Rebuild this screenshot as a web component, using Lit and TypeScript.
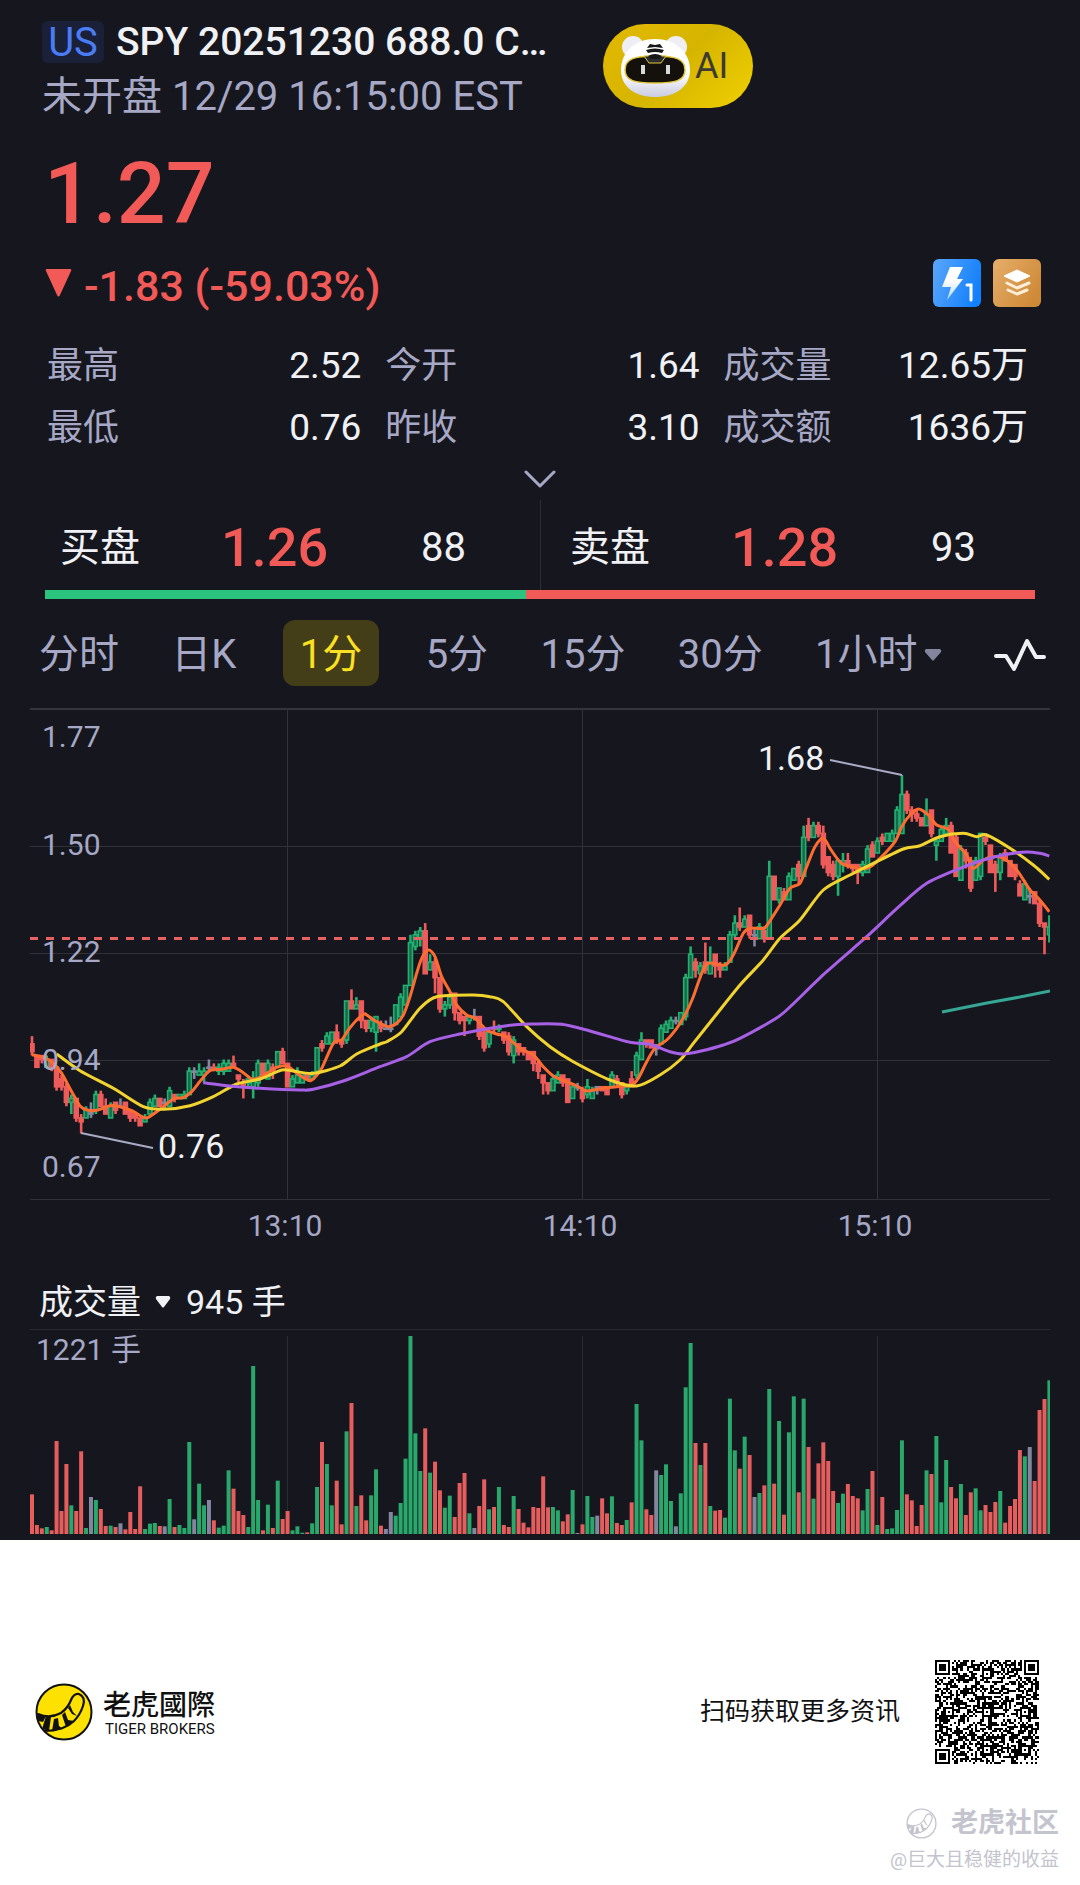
import { LitElement, html, svg, css } from "lit";
import { customElement, state } from "lit/decorators.js";
import { classMap } from "lit/directives/class-map.js";

type Tone = "r" | "g" | "n";

/* One entry per minute: tone, high, body top, body bottom, low (cents), volume height. */
const BARS = `
r 101 99 97 96 119|r 96 96 93 93 27|r 96 96 95 94 17|g 96 95 93 93 21|r 95 95 93 92 11
r 93 93 88 87 279|r 91 90 88 87 69|r 89 88 84 83 210|g 86 85 84 81 86|r 85 85 80 79 69
r 81 80 79 76 248|g 83 82 80 80 18|n 84 82 81 80 111|g 87 86 82 81 102|r 87 86 83 83 75
r 85 83 81 81 24|g 84 83 80 80 25|r 84 84 82 81 21|n 85 83 83 83 32|r 84 84 81 81 14
r 82 82 80 79 66|r 81 81 80 79 15|r 80 80 78 78 143|g 81 80 79 79 15|g 85 84 81 81 31
g 86 85 83 83 33|r 85 85 83 83 24|n 85 84 84 82 23|g 88 87 83 83 105|r 86 86 85 84 21
g 86 86 85 85 27|g 87 86 85 85 18|g 93 92 86 86 276|n 93 92 92 90 44|g 94 92 91 91 151
g 93 92 91 89 86|n 95 93 93 92 102|r 94 93 93 92 41|g 94 93 92 91 19|g 95 94 92 91 25
g 95 94 92 92 191|r 96 94 93 93 136|r 91 91 90 89 69|r 90 89 88 85 57|g 90 90 89 88 21
g 92 90 88 85 504|g 95 94 89 88 102|r 94 94 91 91 11|g 95 94 90 90 88|r 94 93 92 90 18
g 97 97 93 93 160|r 98 97 94 94 45|r 94 94 88 88 69|g 91 90 88 88 11|g 93 91 89 89 23
g 91 91 89 89 4|r 91 91 90 90 5|g 92 91 90 90 32|g 98 98 92 92 141|r 100 99 98 97 276
g 102 101 99 99 210|g 102 102 99 99 86|r 104 102 100 99 160|r 100 100 99 98 29|g 110 110 100 99 308
r 113 110 108 108 393|g 111 109 108 108 84|r 110 110 105 103 116|r 105 105 103 102 41|g 106 105 103 102 116
g 106 106 102 97 194|r 105 104 103 102 25|n 105 103 103 103 15|n 106 103 103 102 66|g 109 109 104 104 55
g 112 111 106 106 93|g 114 114 109 109 226|g 127 125 114 114 594|g 128 127 124 123 302|g 129 128 126 124 189
r 130 128 117 117 317|g 122 120 118 118 184|r 121 120 116 112 217|r 116 116 108 107 131|g 110 109 108 106 79
g 112 111 109 108 115|r 112 112 107 105 51|r 107 107 105 104 153|r 106 106 105 101 183|g 106 106 105 104 62
n 108 106 106 105 18|r 106 106 101 100 84|r 103 102 98 97 164|g 102 102 99 98 74|r 105 103 103 102 81
g 104 103 103 102 141|r 102 102 100 99 27|r 102 101 97 96 21|g 101 100 96 94 114|r 99 99 97 96 75
r 98 98 97 96 34|r 97 97 95 95 20|r 97 97 94 92 81|r 95 94 92 90 78|r 91 91 89 86 173
r 89 89 87 86 80|g 91 90 87 87 81|g 92 91 89 89 71|r 91 91 89 88 38|r 90 90 84 84 59
g 89 88 85 85 132|n 89 88 88 87 3|r 88 87 85 84 29|g 90 88 86 85 114|g 88 87 85 85 51
n 88 88 88 86 55|r 88 88 87 87 107|r 88 88 86 86 62|g 92 91 88 88 113|r 91 90 89 88 33
r 89 89 86 85 27|g 88 88 87 86 42|r 92 90 88 88 95|g 97 96 91 90 390|g 102 100 95 95 281
r 100 100 99 98 74|r 100 100 98 98 57|n 99 98 98 96 191|g 104 103 99 99 177|g 105 104 102 102 209
g 106 105 103 103 99|n 106 105 105 104 23|g 107 107 104 104 122|g 117 116 106 105 440|g 124 122 116 116 573
r 121 120 118 116 273|g 120 119 117 116 207|r 125 120 118 117 273|g 124 120 117 117 84|r 122 122 119 116 70
r 120 119 118 116 72|g 120 119 118 118 49|g 128 127 120 120 406|g 132 130 127 126 251|r 134 130 129 128 196
g 132 131 129 129 292|r 132 132 127 126 237|n 129 127 127 124 111|g 130 129 126 126 123|r 129 128 126 125 146
g 146 142 126 126 435|r 142 142 136 136 151|g 139 139 136 135 339|r 139 138 136 136 58|g 143 142 136 136 305
g 144 144 141 141 413|r 146 145 142 140 125|g 155 152 142 142 406|r 157 155 152 151 261|g 156 155 152 152 106
r 156 155 153 152 212|r 155 153 145 144 275|r 147 147 143 142 219|r 146 145 142 141 129|g 146 146 142 137 93
g 148 146 145 143 121|r 148 146 145 144 150|r 145 145 144 143 114|r 145 145 143 140 107|g 146 145 143 142 71
g 150 149 143 143 135|r 151 150 147 147 189|g 152 151 148 148 27|r 153 152 151 150 111|g 153 153 151 151 15
g 154 153 151 151 17|g 160 159 153 153 72|g 168 163 153 153 281|r 164 163 159 158 119|r 160 159 158 156 101
r 159 158 157 156 24|r 157 157 155 155 87|g 162 158 155 155 191|r 159 159 153 152 180|g 152 151 150 146 294
g 155 154 151 151 95|g 157 155 153 153 222|r 156 155 148 148 141|r 153 152 142 142 107|g 150 149 141 141 150
r 149 148 146 144 57|r 147 146 139 138 125|g 147 146 141 141 137|g 153 153 142 141 71|r 153 152 151 150 87
r 150 150 143 143 66|r 146 145 143 138 96|g 148 147 143 141 129|r 149 148 146 146 34|r 146 146 142 142 84
r 145 145 142 141 105|r 141 140 137 137 252|g 141 140 136 136 233|n 139 137 137 135 261|r 138 138 135 135 159
r 136 135 130 129 372|r 130 130 129 122 405|g 132 129 127 125 461`
  .trim()
  .split(/[|\n]/)
  .map((row) => {
    const [tone, ...nums] = row.trim().split(" ");
    const [high, top, bottom, low, volume] = nums.map(Number);
    return { tone: tone as Tone, high, top, bottom, low, volume: volume / 3 };
  });

const PITCH = 4.915;
const barX = (i: number) => 2 + i * PITCH;
const priceY = (cents: number) => 67 + (168 - cents) * 3.897;

/* The average lines are stored in three segments, in thirds of a chart unit. */
const ORIGINS = [
  [-30, 272],
  [330, 172],
  [670, -8],
];
/* Joins the points of an average line with a smooth curve. */
const average = (...segments: string[]) => {
  const pts = segments.flatMap((segment, i) =>
    segment.split(" ").map((pair) => {
      const [x, y] = pair.split(",").map(Number);
      return [ORIGINS[i][0] + x / 3, ORIGINS[i][1] + y / 3];
    }),
  );
  const at = (i: number) => pts[Math.min(Math.max(i, 0), pts.length - 1)];
  let d = `M${at(0).map((v) => v.toFixed(1))}`;
  for (let i = 0; i < pts.length - 1; i++) {
    const [a, b, c, e] = [at(i - 1), at(i), at(i + 1), at(i + 2)];
    const ends = [
      [b[0] + (c[0] - a[0]) / 7, b[1] + (c[1] - a[1]) / 7],
      [c[0] - (e[0] - b[0]) / 7, c[1] - (e[1] - b[1]) / 7],
      c,
    ];
    d += `C${ends.map((p) => p.map((v) => v.toFixed(1)).join(",")).join(" ")}`;
  }
  return d;
};

const MA_FAST = average(
  "96,224 130,232 155,245 185,280 215,335 240,378 262,390 290,391 330,377 360,380 395,392 430,412 445,412 480,388 520,357 550,353 575,335 605,298 630,272 665,268 700,262 730,278 755,297 780,292 830,262 860,258 885,275 905,290 930,302 945,292 965,265 1000,190 1025,180 1045,150 1070,120 1093,102",
  "20,405 50,425 85,440 110,430 130,405 150,350 170,280 185,235 205,210 225,230 245,290 270,335 290,375 320,405 345,415 380,450 410,462 440,470 480,505 520,525 550,560 580,588 620,605 650,618 680,633 720,626 770,620 815,615 835,595 860,545 885,505 920,480 950,445 975,405 1000,350 1025,280",
  "25,790 75,795 100,765 130,700 150,685 190,685 205,670 240,615 270,565 300,550 320,500 345,440 370,415 390,445 415,480 435,495 500,505 540,475 585,425 605,380 630,345 655,327 685,345 710,375 745,388 765,425 800,465 820,505 850,480 880,470 910,475 950,510 990,570 1015,595 1048,635",
);
const MA_MID = average(
  "170,222 240,272 340,325 430,380 490,388 570,377 640,350 710,312 780,297 845,270 880,273 940,280 1020,258 1070,222 1140,192",
  "80,485 125,455 180,385 230,350 340,345 390,350 430,365 500,440 570,500 640,545 750,600 830,618 900,585 960,540 1000,490 1060,415",
  "120,855 190,780 240,715 300,660 370,570 450,525 520,490 610,447 660,437 720,410 790,400 830,410 860,405 930,445 1000,495 1048,538",
);
const MA_SLOW = average(
  "610,308 690,318 780,325 900,330 940,328 1030,303 1140,260",
  "140,530 210,485 300,462 440,437 520,432 605,433 690,453 810,487 870,493 930,515 970,522 1020,514 1090,495",
  "120,1015 220,960 260,930 380,815 500,710 600,617 680,550 780,505 850,480 920,463 980,456 1020,460 1048,468",
);

const GRID_X = [257, 552, 847];

const cellsPath = () => {
  const size = 49;
  let seed = 20251230;
  const random = () => {
    seed = (seed * 1103515245 + 12345) % 2147483648;
    return seed / 2147483648;
  };
  const cells: boolean[][] = [];
  for (let y = 0; y < size; y++) {
    cells.push([]);
    for (let x = 0; x < size; x++) cells[y].push(random() < 0.52);
  }
  const rings = (cx: number, cy: number, reach: number, dark: (d: number) => boolean) => {
    for (let y = cy - reach; y <= cy + reach; y++)
      for (let x = cx - reach; x <= cx + reach; x++)
        if (cells[y] && x >= 0 && x < size) cells[y][x] = dark(Math.max(Math.abs(x - cx), Math.abs(y - cy)));
  };
  for (const [cx, cy] of [[24, 6], [6, 24], [24, 24], [42, 24], [24, 42], [42, 42]]) rings(cx, cy, 2, (d) => d !== 1);
  for (const [cx, cy] of [[3, 3], [45, 3], [3, 45]]) rings(cx, cy, 4, (d) => d < 2 || d === 3);
  let path = "";
  cells.forEach((row, y) => {
    for (let x = 0; x < size; x++) {
      if (!row[x]) continue;
      let end = x;
      while (end < size && row[end]) end++;
      path += `M${x} ${y}h${end - x}v1H${x}z`;
      x = end;
    }
  });
  return path;
};
const QR_PATH = cellsPath();

@customElement("price-chart")
export class PriceChart extends LitElement {
  static styles = css`
    :host { display: block; }
    svg { display: block; width: 100%; height: auto; font-family: Roboto, "Noto Sans CJK SC", sans-serif; }
    .grid { stroke: #303139; stroke-width: 1; }
    .edge { stroke: #34353a; stroke-width: 2; }
    .axis { fill: #a6a8c6; font-size: 30px; }
    .mid { text-anchor: middle; }
    .mark { fill: #f0f1f5; font-size: 34px; }
    .lead { stroke: #a9abc4; stroke-width: 2; }
    .last { stroke: #e8605f; stroke-width: 3; stroke-dasharray: 8 8; }
    .r { fill: #ee5b5b; stroke: #ee5b5b; }
    .g { fill: #176b48; stroke: #22b070; }
    .n { fill: #84869f; stroke: #84869f; }
    .avg { fill: none; stroke-width: 3; stroke-linejoin: round; }
    .fast { stroke: #fd6d32; }
    .center { stroke: #f3d32f; }
    .slow { stroke: #a860e6; }
    .extra { stroke: #36a695; }
  `;

  render() {
    return html`<svg viewBox="0 0 1020 546" role="img" aria-label="1分 K线">
      <line class="edge" x1="0" y1="1" x2="1020" y2="1" />
      ${[138.5, 245.5, 352.5, 491.5].map((y) => svg`<line class="grid" x1="0" y1=${y} x2="1020" y2=${y} />`)}
      ${GRID_X.map((x) => svg`<line class="grid" x1=${x + 0.5} y1="0" x2=${x + 0.5} y2="491" />`)}
      ${BARS.map((bar, i) => {
        const x = barX(i);
        const top = priceY(bar.top);
        const h = Math.max(priceY(bar.bottom) - top, 1);
        const w = i === BARS.length - 1 ? 2 : 4;
        return svg`<g class=${bar.tone}>
          <line x1=${x} x2=${x} y1=${priceY(bar.high)} y2=${priceY(bar.low)} stroke-width="2.6" />
          <rect x=${x - 2} y=${top} width=${w} height=${h} stroke-width="1.6" />
        </g>`;
      })}
      <path class="avg fast" d=${MA_FAST} />
      <path class="avg center" d=${MA_MID} />
      <path class="avg slow" d=${MA_SLOW} />
      <polyline class="avg extra" points="912,304 957,295 990,289 1020,283" />
      <line class="last" x1="0" y1="230.5" x2="1020" y2="230.5" />
      <line class="lead" x1="800" y1="52" x2="872" y2="67" />
      <line class="lead" x1="51" y1="425" x2="123" y2="440" />
      <text class="mark" x="728" y="62">1.68</text>
      <text class="mark" x="128" y="450">0.76</text>
      ${["1.77", "1.50", "1.22", "0.94", "0.67"].map((t, i) => svg`<text class="axis" x="12" y=${39 + i * 107.5}>${t}</text>`)}
      ${["13:10", "14:10", "15:10"].map((t, i) => svg`<text class="axis mid" x=${GRID_X[i] - 2} y="528">${t}</text>`)}
    </svg>`;
  }
}

@customElement("volume-chart")
export class VolumeChart extends LitElement {
  static styles = css`
    :host { display: block; }
    svg { display: block; width: 100%; height: auto; font-family: Roboto, "Noto Sans CJK SC", sans-serif; }
    .grid { stroke: #2a2b33; stroke-width: 1; }
    .axis { fill: #a6a8c6; font-size: 30px; }
    .r { fill: #e55d5d; }
    .g { fill: #29a86b; }
    .n { fill: #84869f; }
  `;

  render() {
    return html`<svg viewBox="0 0 1020 205" role="img" aria-label="成交量">
      <line class="grid" x1="0" y1="0.5" x2="1020" y2="0.5" />
      ${GRID_X.map((x) => svg`<line class="grid" x1=${x + 0.5} y1="7" x2=${x + 0.5} y2="205" />`)}
      <text class="axis" x="6" y="31">1221 手</text>
      ${BARS.map(
        (bar, i) => svg`<rect class=${bar.tone} x=${barX(i) - 2} y=${205 - bar.volume} width="4" height=${bar.volume} />`,
      )}
    </svg>`;
  }
}

@customElement("app-root")
export class AppRoot extends LitElement {
  static styles = css`
    :host { display: block; font-family: Roboto, "Noto Sans CJK SC", sans-serif; background: #fff; }
    * { box-sizing: border-box; }
    h1, p, dl, dd, dt { margin: 0; font-weight: 400; }
    button { border: 0; padding: 0; background: none; font: inherit; color: inherit; }
    svg { display: block; }
    .quote { background: #16171e; color: #f0f1f5; padding: 20px 0 6px; }
    .head { display: flex; gap: 56px; padding: 0 42px; }
    .ident { width: 505px; }
    .title { display: flex; align-items: center; gap: 12px; height: 44px; line-height: 44px; }
    .market { flex: none; width: 62px; height: 42px; border-radius: 6px; background: #1a2038; color: #4a7df5; text-align: center; line-height: 44px; font-size: 40px; }
    .name { font-weight: 500; font-size: 39px; line-height: 48px; white-space: nowrap; }
    .time { height: 48px; margin-top: 8px; font-size: 40px; line-height: 50px; color: #a6a8c6; white-space: nowrap; }
    .ai { display: flex; align-items: center; width: 150px; height: 84px; margin-top: 4px; padding: 0 16px; border-radius: 42px; background: linear-gradient(135deg, #e2b800, #d6b500 50%, #f0d000); color: #3c3a32; font-size: 36px; }
    .face { flex: none; }
    .price { padding: 0 44px; margin-top: 24px; font-size: 86px; line-height: 100px; font-weight: 500; color: #f25a57; }
    .change { display: flex; align-items: center; gap: 12px; height: 48px; margin-top: 15px; padding: 0 39px 0 45px; }
    .delta { flex: 1; padding-top: 6px; font-size: 43px; line-height: 48px; font-weight: 500; color: #f25a57; }
    .stats { display: grid; grid-template-columns: 32fr 32fr 31fr; gap: 8px 24px; margin-top: 32px; padding: 0 52px 0 47px; font-size: 36px; line-height: 54px; }
    .stat { display: flex; justify-content: space-between; align-items: baseline; height: 54px; }
    .stat dt { color: #a6a8c6; }
    .stat dd { font-size: 37px; }
    .more { display: flex; justify-content: center; align-items: center; width: 100%; height: 42px; margin-top: 3px; }
    .book { display: grid; grid-template-columns: 1fr 1fr; margin: 0 45px; height: 90px; }
    .side { display: grid; grid-template-columns: 161px 200px 1fr; align-items: center; padding: 6px 0 0 15px; font-size: 40px; line-height: 60px; }
    .side + .side { padding-left: 29px; border-left: 1px solid #2c2d35; }
    .level { font-size: 54px; font-weight: 500; color: #f25a57; }
    .ratio { display: flex; height: 9px; margin: 0 45px; background: #f25a57; }
    .buy { background: #2ac47e; }
    .tabs { display: flex; justify-content: space-between; align-items: center; height: 66px; margin: 21px 34px 22px 39px; font-size: 40px; color: #a6a8c6; }
    .tab { display: flex; align-items: center; gap: 6px; height: 66px; padding-top: 3px; line-height: 63px; white-space: nowrap; }
    .on { margin: 0 -6px; padding: 3px 17px 0; border-radius: 12px; background: #433d18; color: #fbe122; }
    .chart { padding: 0 30px; }
    .legend { display: flex; align-items: baseline; gap: 15px; height: 52px; margin: 22px 39px 1px; font-size: 34px; line-height: 52px; }
    .pick { display: flex; align-items: center; gap: 14px; line-height: 52px; }
    .foot { display: flex; align-items: center; padding: 120px 41px 0 35px; color: #111; }
    .brand { display: flex; align-items: center; gap: 10px; flex: 1; }
    .cn { padding-top: 2px; font: 500 28px/32px "Noto Sans CJK TC", sans-serif; }
    .en { font-size: 15px; line-height: 20px; padding-left: 2px; }
    .scan { margin-right: 35px; font-size: 25px; line-height: 34px; }
    .sign { display: flex; flex-direction: column; align-items: flex-end; padding: 39px 21px 9px 0; color: #c3c4cd; }
    .club { display: flex; align-items: center; gap: 14px; font-size: 27px; font-weight: 700; line-height: 40px; }
    .user { font-size: 19px; line-height: 33px; }
  `;

  @state() private period = "1分";

  private tab(label: string, caret = false) {
    return html`<button
      class=${classMap({ tab: true, on: this.period === label })}
      role="tab"
      aria-selected=${this.period === label}
      @click=${() => (this.period = label)}
    >
      ${label}${caret
        ? html`<svg width="18" height="12" viewBox="0 0 18 12"><path d="M2 0h14q2 1 1 3l-7 8q-1 1-2 0L1 3Q0 1 2 0z" fill="#83859d" /></svg>`
        : ""}
    </button>`;
  }

  private tail(color: string) {
    return svg`<path d="M3 31Q15 36 26 30Q33 25 36 17Q39 10 44 11Q51 14 48 23Q45 32 39 38Q29 48 9 48" fill="none" stroke=${color} stroke-width="2.2" />
      <path d="M2 30L11 33L8 39L3 38zM11 33L16 34L14 48L7 46zM19 36L23 35L24 43L28 46L17 48zM27 32L30 29L33 37L39 38L31 44zM33 25L35 22L38 29L42 33L37 31z" fill=${color} />`;
  }

  render() {
    const stats = [
      ["最高", "2.52"], ["今开", "1.64"], ["成交量", "12.65万"],
      ["最低", "0.76"], ["昨收", "3.10"], ["成交额", "1636万"],
    ];
    return html`
      <main class="quote" lang="zh-CN">
        <header class="head">
          <div class="ident">
            <h1 class="title"><span class="market">US</span><span class="name">SPY 20251230 688.0 C…</span></h1>
            <p class="time">未开盘 12/29 16:15:00 EST</p>
          </div>
          <button class="ai">
            <svg class="face" width="76" height="68" viewBox="0 0 76 68">
              <defs>
                <linearGradient id="fur" x1="0" y1="0" x2="0" y2="1">
                  <stop offset="0.6" stop-color="#fff" /><stop offset="1" stop-color="#c9cbe0" />
                </linearGradient>
              </defs>
              <circle cx="14" cy="15" r="11" fill="#eeeef4" /><circle cx="57" cy="15" r="11" fill="#eeeef4" />
              <path d="M36 7C56 7 71 20 71 38C71 55 56 65 36 65S2 55 2 38C2 20 16 7 36 7z" fill="url(#fur)" />
              <path d="M36 24C57 24 66 27 66 38S56 51 36 51S6 49 6 38S15 24 36 24z" fill="#14110d" stroke="#e3c93a" stroke-width="1.5" />
              <path d="M25 24h22l-5 7H30z" fill="#2a2b31" stroke="#e3c93a" />
              <path d="M31 12l5 1 5-1 3 4-8-1-8 1zM27 18q9-3 18 0l-2 3q-7-2-14 0zM29 24q7-4 14 0l-3 3h-8z" fill="#17171b" />
              <path d="M22 33h4v9h-4zM47 33h4v9h-4z" fill="#d7d8dc" />
            </svg>
            <span>AI</span>
          </button>
        </header>
        <p class="price">1.27</p>
        <div class="change">
          <svg width="27" height="30" viewBox="0 0 27 30"><path d="M2 1h23q2 0 1 2L15 27q-1.500 3-3 0L1 3Q0 1 2 1z" fill="#f25a57" /></svg>
          <span class="delta">-1.83 (-59.03%)</span>
          <svg width="48" height="48" viewBox="0 0 48 48">
            <defs>
              <linearGradient id="blue" x1="0" y1="0.2" x2="1" y2="0.5">
                <stop offset="0" stop-color="#57a5fb" /><stop offset="1" stop-color="#1280fb" />
              </linearGradient>
              <linearGradient id="bolt" x1="0" y1="0" x2="0" y2="1">
                <stop offset="0.4" stop-color="#fff" /><stop offset="1" stop-color="#b5d8ff" />
              </linearGradient>
            </defs>
            <rect width="48" height="48" rx="6" fill="url(#blue)" />
            <path d="M17 8H30L24 20H30L14 41L18 28H9z" fill="url(#bolt)" />
            <path d="M34 26h4v15" fill="none" stroke="#fff" stroke-width="3" stroke-linecap="round" />
          </svg>
          <svg width="48" height="48" viewBox="0 0 48 48">
            <defs>
              <linearGradient id="gold" x1="0" y1="0" x2="1" y2="0.6">
                <stop offset="0" stop-color="#e6ae6b" /><stop offset="1" stop-color="#cf8a38" />
              </linearGradient>
            </defs>
            <rect width="48" height="48" rx="6" fill="url(#gold)" />
            <path d="M24 11L37 17L24 23L11 17z" fill="#fff" stroke="#fff" stroke-linejoin="round" />
            <path d="M14 24l10 5 12-5M15 31l9 4 10-4" fill="none" stroke="#fdeeda" stroke-width="3" stroke-linecap="round" stroke-linejoin="round" />
          </svg>
        </div>
        <dl class="stats">
          ${stats.map(([k, v]) => html`<div class="stat"><dt>${k}</dt><dd>${v}</dd></div>`)}
        </dl>
        <button class="more" aria-label="展开">
          <svg width="32" height="20" viewBox="0 0 32 20"><path d="M2 3l14 14L30 3" fill="none" stroke="#a6a8c6" stroke-width="3" stroke-linecap="round" stroke-linejoin="round" /></svg>
        </button>
        <section class="book">
          <div class="side"><span>买盘</span><span class="level">1.26</span><span>88</span></div>
          <div class="side"><span>卖盘</span><span class="level">1.28</span><span>93</span></div>
        </section>
        <div class="ratio"><div class="buy" style="width:${(88 / 181) * 100}%"></div></div>
        <nav class="tabs" role="tablist">
          ${["分时", "日K", "1分", "5分", "15分", "30分"].map((t) => this.tab(t))} ${this.tab("1小时", true)}
          <button class="tab" aria-label="指标">
            <svg width="52" height="36" viewBox="0 0 52 36"><path d="M2 19h10l8 13L33 4l9 16h8" fill="none" stroke="#f0f1f5" stroke-width="4" stroke-linecap="round" stroke-linejoin="round" /></svg>
          </button>
        </nav>
        <div class="chart"><price-chart></price-chart></div>
        <div class="legend">
          <button class="pick">成交量<svg width="16" height="12" viewBox="0 0 16 12"><path d="M2 0h12q2 1 1 3L9 11q-1 1-2 0L1 3Q0 1 2 0z" fill="#f0f1f5" /></svg></button>
          <span>945 手</span>
        </div>
        <div class="chart"><volume-chart></volume-chart></div>
      </main>
      <footer lang="zh-CN">
        <div class="foot">
          <div class="brand">
            <svg width="58" height="58" viewBox="0 0 58 58">
              <circle cx="29" cy="29" r="27.500" fill="#fde100" stroke="#111" stroke-width="2" />${this.tail("#111")}
            </svg>
            <div><p class="cn" lang="zh-TW">老虎國際</p><p class="en">TIGER BROKERS</p></div>
          </div>
          <span class="scan">扫码获取更多资讯</span>
          <svg width="104" height="104" viewBox="0 0 49 49" shape-rendering="crispEdges" role="img" aria-label="二维码"><path d=${QR_PATH} fill="#000" /></svg>
        </div>
        <div class="sign">
          <div class="club">
            <svg width="31" height="31" viewBox="0 0 58 58"><circle cx="29" cy="29" r="27" fill="none" stroke="#c3c4cd" stroke-width="2.500" />${this.tail("#c3c4cd")}</svg>
            <span>老虎社区</span>
          </div>
          <span class="user">@巨大且稳健的收益</span>
        </div>
      </footer>
    `;
  }
}
